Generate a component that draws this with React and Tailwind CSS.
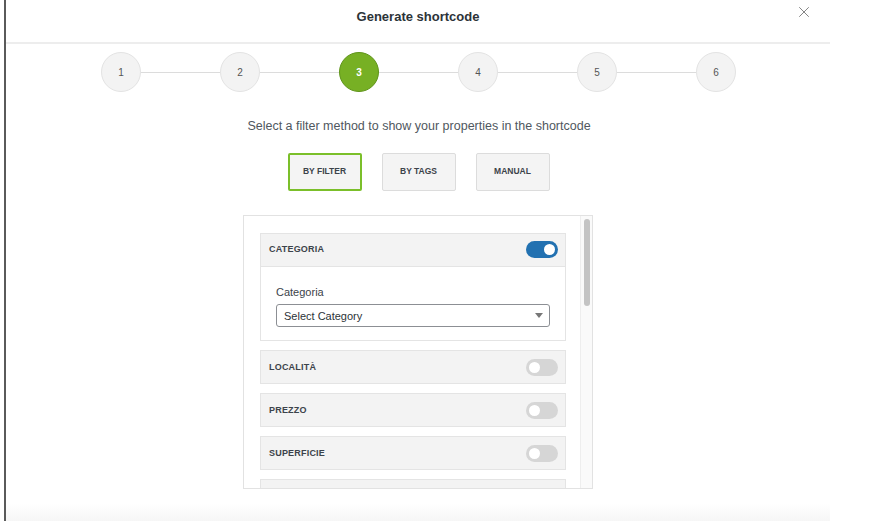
import { X } from "lucide-react";

const STEPS = [1, 2, 3, 4, 5, 6];
const CURRENT = 3;

const METHODS = [
  { key: "filter", label: "BY FILTER", active: true },
  { key: "tags", label: "BY TAGS" },
  { key: "manual", label: "MANUAL" },
];

const FILTERS = [
  { key: "localita", label: "LOCALITÀ" },
  { key: "prezzo", label: "PREZZO" },
  { key: "superficie", label: "SUPERFICIE" },
];

function Toggle({ on }) {
  return (
    <div
      className={`w-[32px] h-[17px] rounded-full flex items-center px-[3px] ${
        on ? "bg-[#2271b1] justify-end" : "bg-[#d6d6d6] justify-start"
      }`}
    >
      <div className="w-[11px] h-[11px] rounded-full bg-white" />
    </div>
  );
}

function FilterRow({ label, on }) {
  return (
    <div className="h-[34px] shrink-0 bg-[#f3f3f3] border border-[#e4e4e4] flex items-center justify-between pl-[8px] pr-[7px]">
      <span className="text-[9px] font-bold tracking-[0.2px] text-[#3c434a]">{label}</span>
      <Toggle on={on} />
    </div>
  );
}

export default function App() {
  return (
    <div
      className="w-[890px] h-[521px] bg-white flex overflow-hidden"
      style={{ fontFamily: '"Liberation Sans", Arial, sans-serif' }}
    >
      <div className="w-[2px] ml-[4px] bg-[#5a5a5a] shrink-0" />

      <div className="w-[824px] relative flex flex-col shrink-0">
        {/* Header */}
        <div className="h-[44px] shrink-0 border-b-2 border-[#ededed] flex items-center justify-center pb-[8px]">
          <h1 className="text-[13px] font-semibold text-[#2c3338]">Generate shortcode</h1>
        </div>
        <button className="absolute top-[3px] right-[17px] text-[#777]">
          <X size={18} strokeWidth={1.2} />
        </button>

        {/* Steps */}
        <div className="flex items-center justify-center mt-[8px] pl-[1px]">
          {STEPS.map((n, i) => (
            <div key={n} className="flex items-center">
              {i > 0 && <div className="w-[79px] h-px bg-[#dcdcdc]" />}
              <div
                className={`w-[40px] h-[40px] rounded-full flex items-center justify-center text-[10px] ${
                  n === CURRENT
                    ? "bg-[#77b024] border border-[#5f941a] text-white font-bold"
                    : "bg-[#f3f3f3] border border-[#e3e3e3] text-[#555]"
                }`}
              >
                {n}
              </div>
            </div>
          ))}
        </div>

        <p className="text-center text-[12.5px] text-[#50575e] mt-[25px] pl-[2px]">
          Select a filter method to show your properties in the shortcode
        </p>

        {/* Method buttons */}
        <div className="flex justify-center gap-[20px] mt-[17px] pl-[1px]">
          {METHODS.map((m) => (
            <button
              key={m.key}
              className={`w-[74px] h-[38px] bg-[#f4f4f4] rounded-[2px] text-[8.5px] font-semibold text-[#3c434a] ${
                m.active ? "border-2 border-[#7bbf2a]" : "border border-[#dcdcdc]"
              }`}
            >
              {m.label}
            </button>
          ))}
        </div>

        {/* Filter panel */}
        <div className="mx-auto mt-[24px] w-[350px] h-[274px] shrink-0 border border-[#e2e2e2] bg-white flex overflow-hidden">
          <div className="flex-1 pl-[16px] pr-[14px] pt-[17px] flex flex-col gap-[9px]">
            <div className="border border-[#e4e4e4] shrink-0">
              <div className="h-[33px] bg-[#f3f3f3] border-b border-[#e4e4e4] flex items-center justify-between pl-[8px] pr-[7px]">
                <span className="text-[9px] font-bold tracking-[0.2px] text-[#3c434a]">CATEGORIA</span>
                <Toggle on />
              </div>
              <div className="px-[15px] pt-[17px] pb-[13px]">
                <label className="block text-[11px] text-[#3c434a] mb-[4px]">Categoria</label>
                <div className="h-[23px] border border-[#8c8f94] rounded-[3px] flex items-center justify-between pl-[7px] pr-[6px]">
                  <span className="text-[11px] text-[#2c3338]">Select Category</span>
                  <svg width="8" height="5" viewBox="0 0 8 5">
                    <path d="M0 0 L8 0 L4 5 Z" fill="#777" />
                  </svg>
                </div>
              </div>
            </div>
            {FILTERS.map((f) => (
              <FilterRow key={f.key} label={f.label} />
            ))}
            <div className="h-[34px] bg-[#f3f3f3] border border-[#e4e4e4] shrink-0" />
          </div>
          {/* scrollbar */}
          <div className="w-[12px] border-l border-[#eeeeee] bg-[#fafafa] pt-[3px] flex justify-center">
            <div className="w-[6px] h-[87px] rounded-full bg-[#c4c4c4]" />
          </div>
        </div>

        {/* Footer fade */}
        <div className="absolute left-0 right-0 bottom-0 h-[18px] bg-gradient-to-b from-white to-[#f6f6f6]" />
      </div>
    </div>
  );
}
